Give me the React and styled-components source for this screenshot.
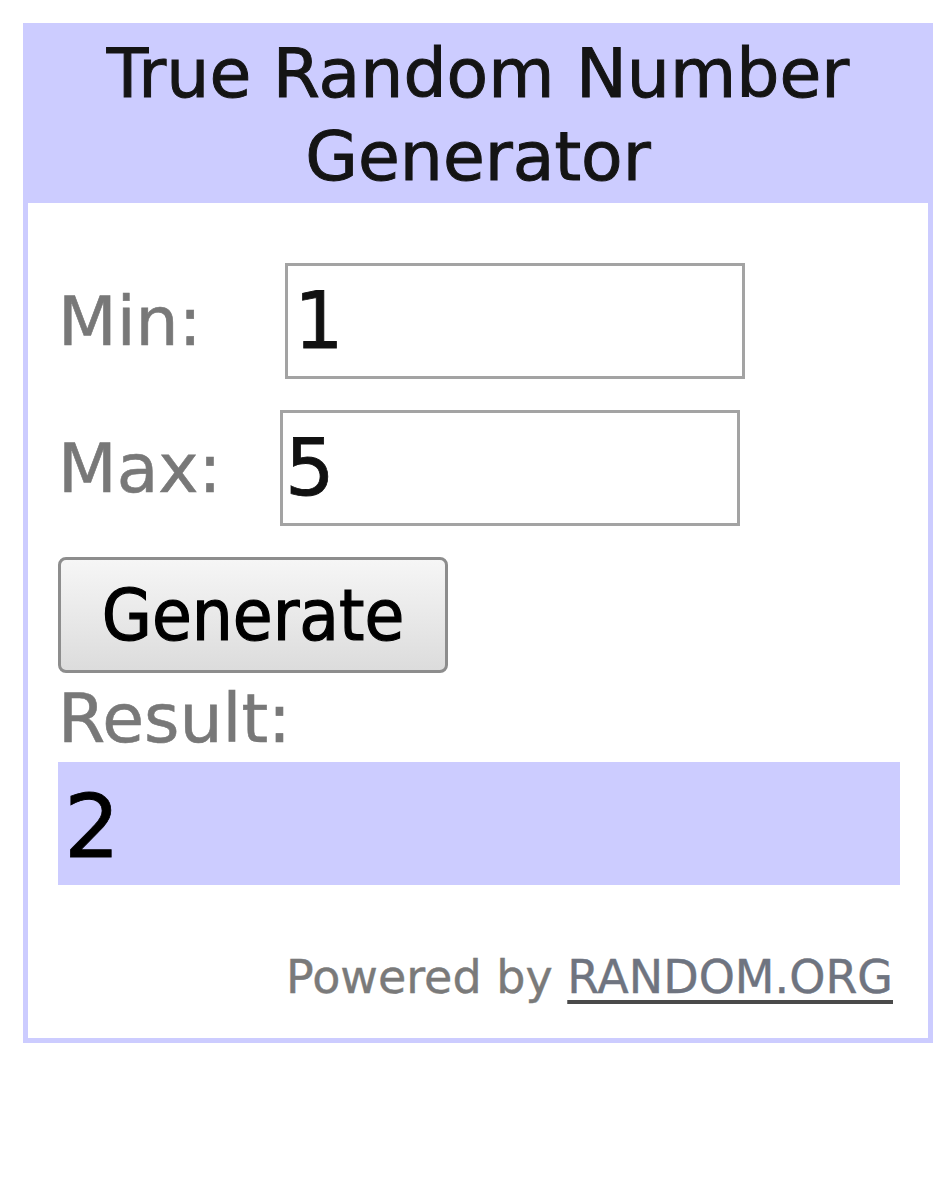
import React from "react";
import styled, { createGlobalStyle } from "styled-components";

const Global = createGlobalStyle`
  html, body {
    margin: 0;
    padding: 0;
    background: #ffffff;
  }
  body {
    font-family: "DejaVu Sans", Verdana, sans-serif;
  }
  * { box-sizing: border-box; }
`;

const Page = styled.div`
  padding: 23px 0 0 23px;
`;

const Widget = styled.div`
  width: 910px;
  border: 5px solid #ccccff;
  background: #ffffff;
`;

const Header = styled.div`
  background: #ccccff;
  color: #141414;
  font-family: "DejaVu Sans", Verdana, sans-serif;
  font-size: 68px;
  line-height: 83px;
  text-align: center;
  padding: 4px 0 5px;
  -webkit-text-stroke: 1px #141414;
`;

const Body = styled.div`
  display: flex;
  flex-direction: column;
  padding: 60px 28px 34px 30px;
`;

const Row = styled.div`
  display: flex;
  align-items: center;
  margin-bottom: 31px;
`;

const Label = styled.span`
  display: block;
  width: 222px;
  color: #787878;
  font-size: 68px;
  line-height: 79px;
  font-family: "DejaVu Sans", Verdana, sans-serif;
  -webkit-text-stroke: 0.6px #787878;
`;

const NumberInput = styled.input`
  width: 460px;
  height: 116px;
  margin-left: ${(p) => p.$shift || 0}px;
  border: 3px solid #a3a3a3;
  background: #ffffff;
  color: #111111;
  font-family: "DejaVu Sans", Verdana, sans-serif;
  font-size: 78px;
  padding: 0 0 0 ${(p) => p.$pad || 3}px;
  outline: none;
  border-radius: 0;
  -webkit-text-stroke: 0.8px #111111;
`;

const Button = styled.button`
  align-self: flex-start;
  width: 390px;
  height: 116px;
  border: 3px solid #8d8d8d;
  border-radius: 8px;
  background: linear-gradient(#f6f6f6, #e9e9e9 50%, #dcdcdc);
  color: #000000;
  font-family: "DejaVu Sans Condensed", "DejaVu Sans", sans-serif;
  font-stretch: condensed;
  font-size: 72px;
  padding: 0;
  display: flex;
  align-items: center;
  justify-content: center;
  cursor: pointer;
  -webkit-text-stroke: 1.2px #000000;
`;

const ResultLabel = styled(Label)`
  margin-top: 6px;
`;

const ResultBox = styled.div`
  margin-top: 4px;
  height: 123px;
  background: #ccccff;
  color: #000000;
  font-family: "DejaVu Sans", Verdana, sans-serif;
  font-size: 88px;
  line-height: 102px;
  padding: 14px 0 7px 6px;
  -webkit-text-stroke: 0.8px #000000;
`;

const Footer = styled.div`
  margin-top: 65px;
  text-align: right;
  padding-right: 7px;
  color: #7a7a7a;
  font-family: "DejaVu Sans", Verdana, sans-serif;
  font-size: 46px;
  line-height: 54px;
  -webkit-text-stroke: 0.4px #7a7a7a;
`;

const Link = styled.a`
  color: #6f7480;
  -webkit-text-stroke: 0.4px #6f7480;
  text-decoration: underline;
  text-decoration-color: #4a4a4a;
  text-decoration-thickness: 4px;
  text-underline-offset: 7px;
`;

export default function App() {
  return (
    <Page>
      <Global />
      <Widget>
        <Header>
          True Random Number
          <br />
          Generator
        </Header>
        <Body>
          <Row>
            <Label>Min:</Label>
            <NumberInput $shift={5} $pad={6} defaultValue="1" />
          </Row>
          <Row>
            <Label>Max:</Label>
            <NumberInput $pad={2} defaultValue="5" />
          </Row>
          <Button type="button">Generate</Button>
          <ResultLabel>Result:</ResultLabel>
          <ResultBox>2</ResultBox>
          <Footer>
            Powered by <Link href="#">RANDOM.ORG</Link>
          </Footer>
        </Body>
      </Widget>
    </Page>
  );
}
